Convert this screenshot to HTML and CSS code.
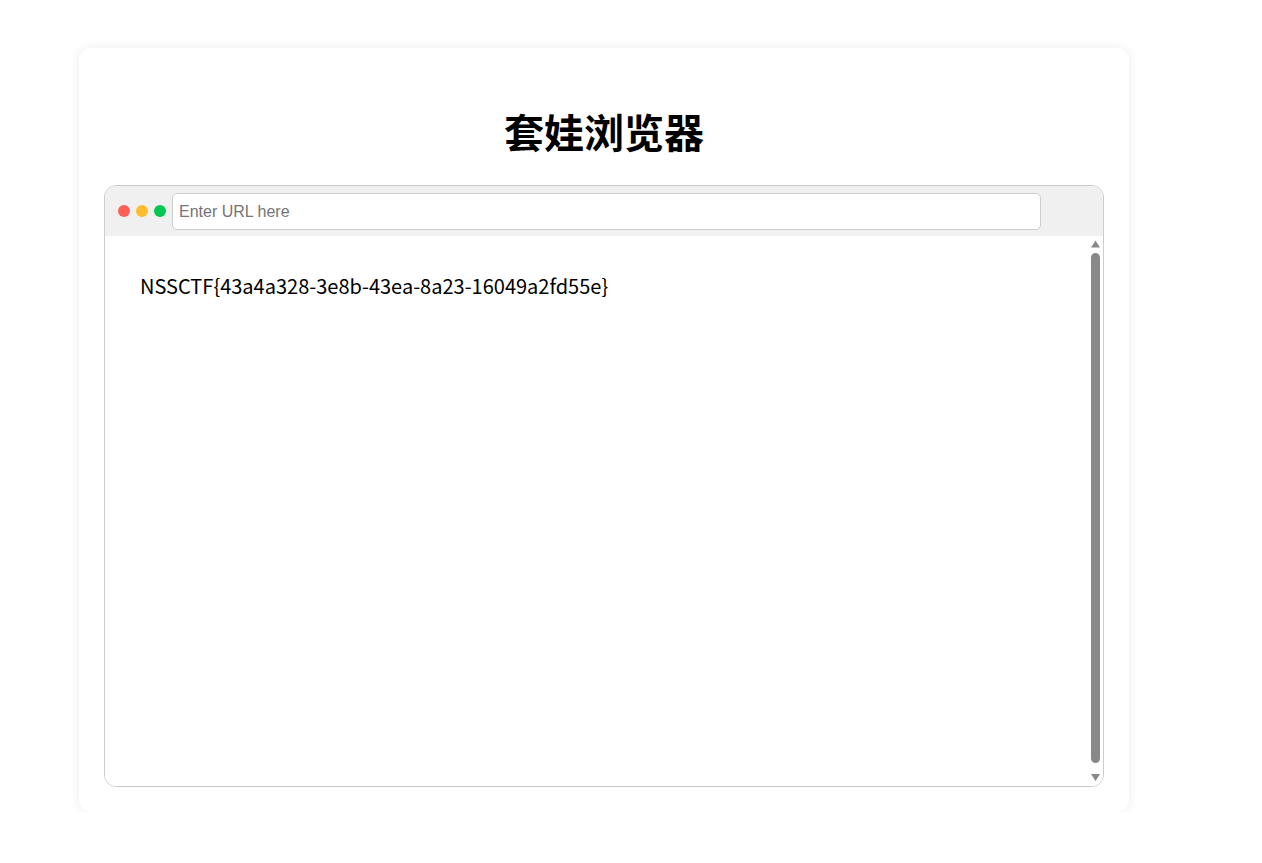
FILE: index.html
```html
<!DOCTYPE html>
<html>
<head>
    <title>套娃浏览器</title>
    <link rel="stylesheet" href="styles.css">
</head>
<body>
    <div class="container">
        <h1>套娃浏览器</h1>
        <div class="browser">
            <div class="toolbar">
                <span class="dot red"></span>
                <span class="dot yellow"></span>
                <span class="dot green"></span>
                <input type="text" id="url" class="url-bar" placeholder="Enter URL here">
            </div>
            <div class="viewport">
                <div class="page">NSSCTF{43a4a328-3e8b-43ea-8a23-16049a2fd55e}</div>
                <div class="scrollbar">
                    <svg class="arrow" width="15" height="15" viewBox="0 0 15 15"><path d="M7.5 4.5 L12 11.5 L3 11.5 Z" fill="#888"/></svg>
                    <div class="track"><div class="thumb"></div></div>
                    <svg class="arrow" width="15" height="15" viewBox="0 0 15 15"><path d="M3 3 L12 3 L7.5 10 Z" fill="#888"/></svg>
                </div>
            </div>
        </div>
    </div>
</body>
</html>
```

FILE: styles.css
```css
body {
    font-family: "Noto Sans CJK SC", "Noto Sans", sans-serif;
    background-color: #fff;
    margin: 0;
}

.container {
    background-color: #fff;
    border-radius: 12px;
    box-shadow: 0 0 12px rgba(0, 0, 0, 0.08);
    width: 1000px;
    margin: 48px 0 0 79px;
    padding: 0 25px 25px;
}

h1 {
    font-size: 40px;
    font-weight: bold;
    text-align: center;
    line-height: 56px;
    margin: 0;
    padding: 55px 0 26px;
}

.browser {
    border: 1px solid #ccc;
    border-radius: 12px;
    overflow: hidden;
}

.toolbar {
    background-color: #f0f0f0;
    height: 50px;
    display: flex;
    align-items: center;
    padding: 0 13px;
    gap: 6px;
}

.dot {
    width: 12px;
    height: 12px;
    border-radius: 50%;
    flex: none;
}

.red { background-color: #ff5f56; }
.yellow { background-color: #ffbd2e; }
.green { background-color: #00c853; }

.url-bar {
    width: 869px;
    height: 37px;
    box-sizing: border-box;
    margin-top: 1px;
    padding: 0 6px;
    border: 1px solid #ccc;
    border-radius: 5px;
    background: #fff;
    font-family: "Liberation Sans", Arial, sans-serif;
    font-size: 16px;
}

.url-bar::placeholder {
    color: #757575;
}

.viewport {
    height: 550px;
    display: flex;
    background: #fff;
}

.page {
    flex: 1;
    padding: 35px 35px;
    font-size: 20px;
    line-height: 30px;
    color: #000;
}

.scrollbar {
    width: 15px;
    flex: none;
    display: flex;
    flex-direction: column;
}

.arrow {
    display: block;
    flex: none;
}

.track {
    flex: 1;
    padding: 2px 3px 0;
}

.thumb {
    height: 510px;
    background-color: #888;
    border-radius: 5px;
}
```
